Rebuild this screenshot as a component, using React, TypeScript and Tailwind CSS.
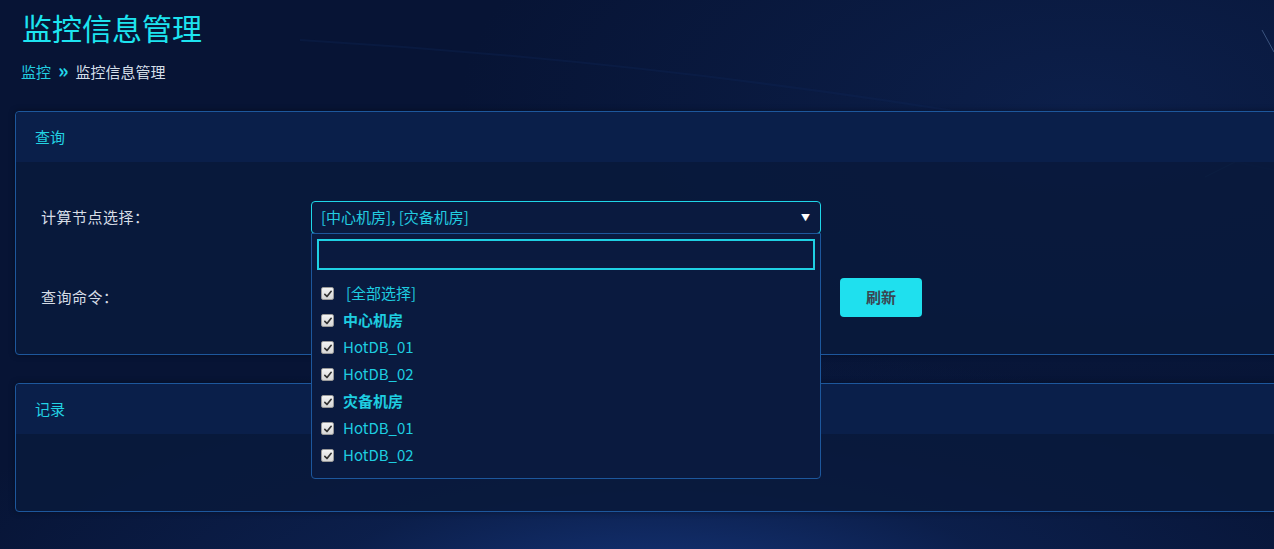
import { useState } from 'react';

const options = [
  { label: '[全部选择]', group: false, all: true },
  { label: '中心机房', group: true },
  { label: 'HotDB_01', group: false },
  { label: 'HotDB_02', group: false },
  { label: '灾备机房', group: true },
  { label: 'HotDB_01', group: false },
  { label: 'HotDB_02', group: false },
];

function CheckBox() {
  return (
    <span className="w-[13px] h-[13px] shrink-0 rounded-[2px] border border-[#9a9a9a] bg-gradient-to-b from-[#f4f4f4] to-[#d6d6d6] flex items-center justify-center">
      <svg viewBox="0 0 12 12" className="w-[10px] h-[10px]">
        <path d="M2.2 6.4 L4.8 9 L9.8 2.8" fill="none" stroke="#333" strokeWidth="2" strokeLinecap="round" strokeLinejoin="round" />
      </svg>
    </span>
  );
}

function Panel({ title, children, bodyClass }: { title: string; children?: React.ReactNode; bodyClass: string }) {
  return (
    <section className="w-[1290px] rounded-[4px] border border-[#1d579c] bg-[#09193c]/90 shadow-[0_0_6px_rgba(0,0,0,0.35)]">
      <div className="h-[50px] flex items-center px-[19px] bg-[#0a1f4a] rounded-t-[4px] text-[15px] text-[#22d3e4]">
        {title}
      </div>
      <div className={bodyClass}>{children}</div>
    </section>
  );
}

export default function App() {
  const [open] = useState(true);

  return (
    <div
      className="relative w-[1274px] h-[549px] overflow-hidden bg-[#071435] bg-[radial-gradient(ellipse_60%_45%_at_52%_108%,#15357a_0%,#10296080_45%,transparent_100%),radial-gradient(ellipse_70%_80%_at_85%_20%,#0c1f4a_0%,transparent_70%)]"
      style={{ fontFamily: '"Noto Sans CJK SC", "Noto Sans", sans-serif' }}
    >
      {/* 背景装饰线 */}
      <svg className="absolute inset-0 pointer-events-none" width="1274" height="549">
        <path d="M1262 30 L1274 52" stroke="#5c7aa8" strokeWidth="1" opacity="0.6" />
        <path d="M1205 177 L1235 162" stroke="#3c5c8f" strokeWidth="1" opacity="0.5" />
        <path d="M300 40 Q 800 70 1274 170" stroke="#0f2557" strokeWidth="2" fill="none" opacity="0.35" />
      </svg>

      <div className="relative px-[15px]">
        <h1 className="pl-[7px] pt-[7px] text-[30px] leading-[40px] text-[#1de4f0]">监控信息管理</h1>
        <div className="pl-[6px] mt-[14px] flex items-center gap-[7px] text-[15px] leading-[22px]">
          <span className="text-[#22cde0]">监控</span>
          <span className="text-[#22d8ea] text-[20px] leading-[18px] -mt-[4px] font-bold">»</span>
          <span className="text-[#d5dfe8]">监控信息管理</span>
        </div>

        <div className="mt-[28px] flex flex-col gap-[28px]">
          <Panel title="查询" bodyClass="h-[192px] pt-[39px] pl-[25px] text-[15px] text-[#d6dde6]">
            <div className="flex items-start">
              <div className="w-[270px] h-[33px] flex items-center tracking-[0.5px]">计算节点选择：</div>
              <div className="relative w-[510px]">
                <div className="h-[33px] rounded-[4px] border border-[#1fd6e8] flex items-center justify-between pl-[9px] pr-[10px] text-[#22cde0] bg-[#0a1a3f]">
                  <span>[中心机房], [灾备机房]</span>
                  <span className="text-white text-[9px]">▼</span>
                </div>
                {open && (
                  <div className="absolute left-0 top-[32px] z-10 w-[510px] h-[246px] rounded-b-[4px] border border-[#1d579c] bg-[#0a1a3f] px-[5px] pt-[5px]">
                    <div className="h-[31px] border-2 border-[#1fd0e2] bg-[#0a1a3f]" />
                    <ul className="mt-[10px] pl-[4px]">
                      {options.map((o, i) => (
                        <li key={i} className="h-[27px] flex items-center gap-[9px]">
                          <CheckBox />
                          <span
                            className={`text-[15px] text-[#1ecde0] ${o.group ? 'font-bold' : ''} ${o.all ? 'pl-[3px]' : ''}`}
                          >
                            {o.label}
                          </span>
                        </li>
                      ))}
                    </ul>
                  </div>
                )}
              </div>
            </div>
            <div className="flex items-center mt-[44px]">
              <div className="w-[799px] h-[38px] flex items-center tracking-[0.5px]">查询命令：</div>
              <button className="w-[82px] h-[39px] rounded-[4px] bg-[#1fe0ee] text-[15px] font-bold text-[#3a4652]">刷新</button>
            </div>
          </Panel>

          <Panel title="记录" bodyClass="h-[77px]" />
        </div>
      </div>
    </div>
  );
}
